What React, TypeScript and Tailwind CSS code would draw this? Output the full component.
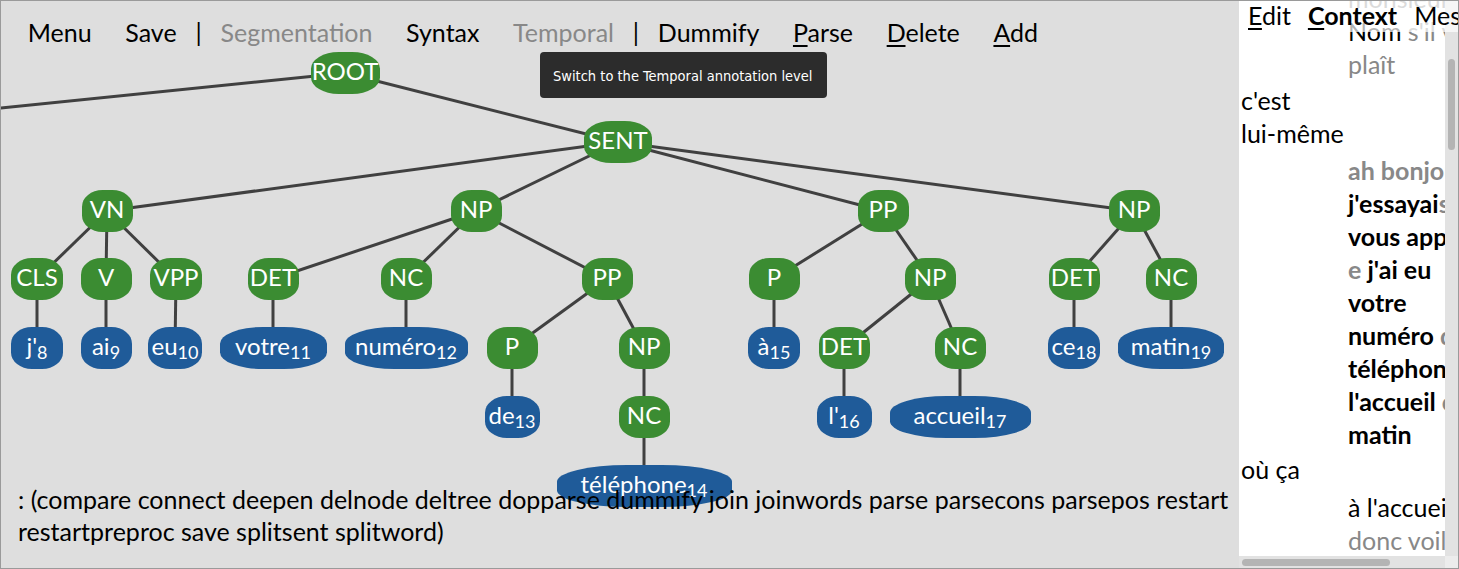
import React from 'react'

type TreeNode = { id: string; label: string; sub?: string; x: number; y: number; w: number; leaf?: boolean }

const TOP = 52

const nodes: TreeNode[] = [
  { id: 'root', label: 'ROOT', x: 345, y: 52, w: 69 },
  { id: 'sent', label: 'SENT', x: 618, y: 121, w: 68 },
  { id: 'vn', label: 'VN', x: 107, y: 190, w: 51 },
  { id: 'np1', label: 'NP', x: 476, y: 190, w: 51 },
  { id: 'pp1', label: 'PP', x: 883, y: 190, w: 51 },
  { id: 'np2', label: 'NP', x: 1134, y: 190, w: 51 },
  { id: 'cls', label: 'CLS', x: 37, y: 258, w: 52 },
  { id: 'v', label: 'V', x: 106, y: 258, w: 51 },
  { id: 'vpp', label: 'VPP', x: 176, y: 258, w: 52 },
  { id: 'det1', label: 'DET', x: 273, y: 258, w: 51 },
  { id: 'nc1', label: 'NC', x: 406, y: 258, w: 51 },
  { id: 'pp2', label: 'PP', x: 607, y: 258, w: 51 },
  { id: 'p2', label: 'P', x: 774, y: 258, w: 51 },
  { id: 'np3', label: 'NP', x: 930, y: 258, w: 51 },
  { id: 'det3', label: 'DET', x: 1074, y: 258, w: 51 },
  { id: 'nc3', label: 'NC', x: 1171, y: 258, w: 51 },
  { id: 'p1', label: 'P', x: 512, y: 327, w: 51 },
  { id: 'np4', label: 'NP', x: 644, y: 327, w: 51 },
  { id: 'det2', label: 'DET', x: 844, y: 327, w: 51 },
  { id: 'nc2', label: 'NC', x: 960, y: 327, w: 51 },
  { id: 'nc4', label: 'NC', x: 644, y: 396, w: 51 },
  { id: 'w8', label: "j'", sub: '8', x: 37, y: 327, w: 52, leaf: true },
  { id: 'w9', label: 'ai', sub: '9', x: 106, y: 327, w: 51, leaf: true },
  { id: 'w10', label: 'eu', sub: '10', x: 175, y: 327, w: 54, leaf: true },
  { id: 'w11', label: 'votre', sub: '11', x: 273, y: 327, w: 107, leaf: true },
  { id: 'w12', label: 'numéro', sub: '12', x: 406, y: 327, w: 123, leaf: true },
  { id: 'w15', label: 'à', sub: '15', x: 774, y: 327, w: 52, leaf: true },
  { id: 'w18', label: 'ce', sub: '18', x: 1074, y: 327, w: 52, leaf: true },
  { id: 'w19', label: 'matin', sub: '19', x: 1171, y: 327, w: 106, leaf: true },
  { id: 'w13', label: 'de', sub: '13', x: 512, y: 396, w: 55, leaf: true },
  { id: 'w16', label: "l'", sub: '16', x: 844, y: 396, w: 55, leaf: true },
  { id: 'w17', label: 'accueil', sub: '17', x: 960, y: 396, w: 141, leaf: true },
  { id: 'w14', label: 'téléphone', sub: '14', x: 644, y: 465, w: 175, leaf: true },
]

const edges: [string, string][] = [
  ['root', 'sent'],
  ['sent', 'vn'], ['sent', 'np1'], ['sent', 'pp1'], ['sent', 'np2'],
  ['vn', 'cls'], ['vn', 'v'], ['vn', 'vpp'],
  ['np1', 'det1'], ['np1', 'nc1'], ['np1', 'pp2'],
  ['pp2', 'p1'], ['pp2', 'np4'], ['np4', 'nc4'], ['nc4', 'w14'], ['p1', 'w13'],
  ['pp1', 'p2'], ['pp1', 'np3'], ['p2', 'w15'],
  ['np3', 'det2'], ['np3', 'nc2'], ['det2', 'w16'], ['nc2', 'w17'],
  ['np2', 'det3'], ['np2', 'nc3'], ['det3', 'w18'], ['nc3', 'w19'],
  ['cls', 'w8'], ['v', 'w9'], ['vpp', 'w10'], ['det1', 'w11'], ['nc1', 'w12'],
]

const byId = Object.fromEntries(nodes.map((n) => [n.id, n]))

function MenuItem({ children, gray }: { children: React.ReactNode; gray?: boolean }) {
  return <span className={`px-[16.8px] ${gray ? 'text-[#888888]' : 'text-black'}`}>{children}</span>
}

function Key({ children }: { children: React.ReactNode }) {
  return <span className="underline decoration-2 underline-offset-[3px]">{children}</span>
}

function Line({ children, className = '' }: { children: React.ReactNode; className?: string }) {
  return <div className={`h-[33px] leading-[33px] whitespace-nowrap ${className}`}>{children}</div>
}

export default function App() {
  return (
    <div className="w-[1459px] h-[569px] flex border border-[#9a9a9a] bg-[#dedede] overflow-hidden font-['Lato',sans-serif] text-[25px]">
      <div className="relative w-[1238px] flex flex-col">
        <div className="h-[51px] pt-[15px] pl-[10px] flex leading-[32px]">
          <MenuItem>Menu</MenuItem>
          <MenuItem>Save</MenuItem>
          <span className="px-[2px]">|</span>
          <MenuItem gray>Segmentation</MenuItem>
          <MenuItem>Syntax</MenuItem>
          <MenuItem gray>Temporal</MenuItem>
          <span className="px-[2px]">|</span>
          <MenuItem>Dummify</MenuItem>
          <MenuItem><Key>P</Key>arse</MenuItem>
          <MenuItem><Key>D</Key>elete</MenuItem>
          <MenuItem><Key>A</Key>dd</MenuItem>
        </div>

        <div className="relative h-[431px] text-[24px]">
          <svg className="absolute left-0 top-0 overflow-visible" width={1238} height={431} viewBox={`1 ${TOP} 1238 431`}>
            <line x1={345} y1={73} x2={0} y2={108} stroke="#404040" strokeWidth={3} />
            {edges.map(([a, b]) => {
              const p = byId[a]
              const c = byId[b]
              return <line key={a + b} x1={p.x} y1={p.y + 21} x2={c.x} y2={c.y + 21} stroke="#404040" strokeWidth={3} />
            })}
          </svg>
          {nodes.map((n) => (
            <div
              key={n.id}
              className={`absolute h-[42px] flex items-center justify-center pb-[5px] rounded-[40%] text-white leading-[24px] ${n.leaf ? 'bg-[#1f5b99]' : 'bg-[#3b8c32]'}`}
              style={{ left: n.x - n.w / 2 - 1, top: n.y - TOP, width: n.w }}
            >
              <span className="whitespace-nowrap">
                {n.label}
                {n.sub && <sub className="text-[18px]">{n.sub}</sub>}
              </span>
            </div>
          ))}
        </div>

        <div className="relative z-10 pl-[17px] leading-[32px] text-black">
          <div className="whitespace-nowrap">: (compare connect deepen delnode deltree dopparse dummify join joinwords parse parsecons parsepos restart</div>
          <div className="whitespace-nowrap">restartpreproc save splitsent splitword)</div>
        </div>

        <div className="absolute left-[539px] top-[51px] w-[287px] h-[46px] rounded-[4px] bg-[#2c2c2c] pl-[13px] pt-[3px] flex items-center text-white text-[14.5px] font-['DejaVu_Sans_Condensed','DejaVu_Sans',sans-serif] font-stretch-condensed whitespace-nowrap">
          Switch to the Temporal annotation level
        </div>
      </div>

      <div className="relative w-[219px] flex flex-col">
        <div className="flex flex-1 min-h-0">
          <div className="flex-1 bg-white overflow-hidden">
            <div className="-mt-[19px] leading-[33px]">
              <div className="flex">
                <div className="w-[109px] shrink-0" />
                <div className="text-[#888888]">
                  <Line>monsieur</Line>
                  <Line><span className="text-black">Nom</span> s'il vous</Line>
                  <Line>plaît</Line>
                </div>
              </div>
              <div className="flex pl-[2px] mt-[3px]">
                <div className="w-[107px] shrink-0 text-black">
                  <Line>c'est</Line>
                  <Line>lui-même</Line>
                </div>
              </div>
              <div className="flex mt-[4px]">
                <div className="w-[109px] shrink-0" />
                <div className="font-bold text-black">
                  <Line className="text-[#888888]">ah bonjour</Line>
                  <Line>j'essayai<span className="text-[#888888]">s</span></Line>
                  <Line>vous appeler</Line>
                  <Line><span className="text-[#888888]">e</span> j'ai eu</Line>
                  <Line>votre</Line>
                  <Line>numéro <span className="text-[#888888]">de</span></Line>
                  <Line>téléphone</Line>
                  <Line>l'accueil <span className="text-[#888888]">ce</span></Line>
                  <Line>matin</Line>
                </div>
              </div>
              <div className="flex pl-[2px] mt-[2px]">
                <div className="w-[107px] shrink-0 text-black">
                  <Line>où ça</Line>
                </div>
              </div>
              <div className="flex mt-[5px]">
                <div className="w-[109px] shrink-0" />
                <div>
                  <Line className="text-black">à l'accueil</Line>
                  <Line className="text-[#888888]">donc voilà</Line>
                </div>
              </div>
            </div>
          </div>
          <div className="w-[13px] bg-[#e2e2e2] flex justify-center">
            <div className="mt-[58px] w-[7px] h-[91px] rounded-full bg-[#b4b4b4]" />
          </div>
        </div>
        <div className="h-[12px] flex bg-[#e2e2e2]">
          <div className="flex-1">
            <div className="ml-[3px] mt-[3px] w-[148px] h-[7px] rounded-full bg-[#b4b4b4]" />
          </div>
          <div className="w-[13px] bg-[#ececec]" />
        </div>
        <div className="absolute left-0 right-0 top-0 h-[31px] bg-white/70 pl-[9px] flex gap-[17px] leading-[28px] text-black whitespace-nowrap">
          <span><Key>E</Key>dit</span>
          <span className="font-bold"><Key>C</Key>ontext</span>
          <span>Messages</span>
        </div>
      </div>
    </div>
  )
}
